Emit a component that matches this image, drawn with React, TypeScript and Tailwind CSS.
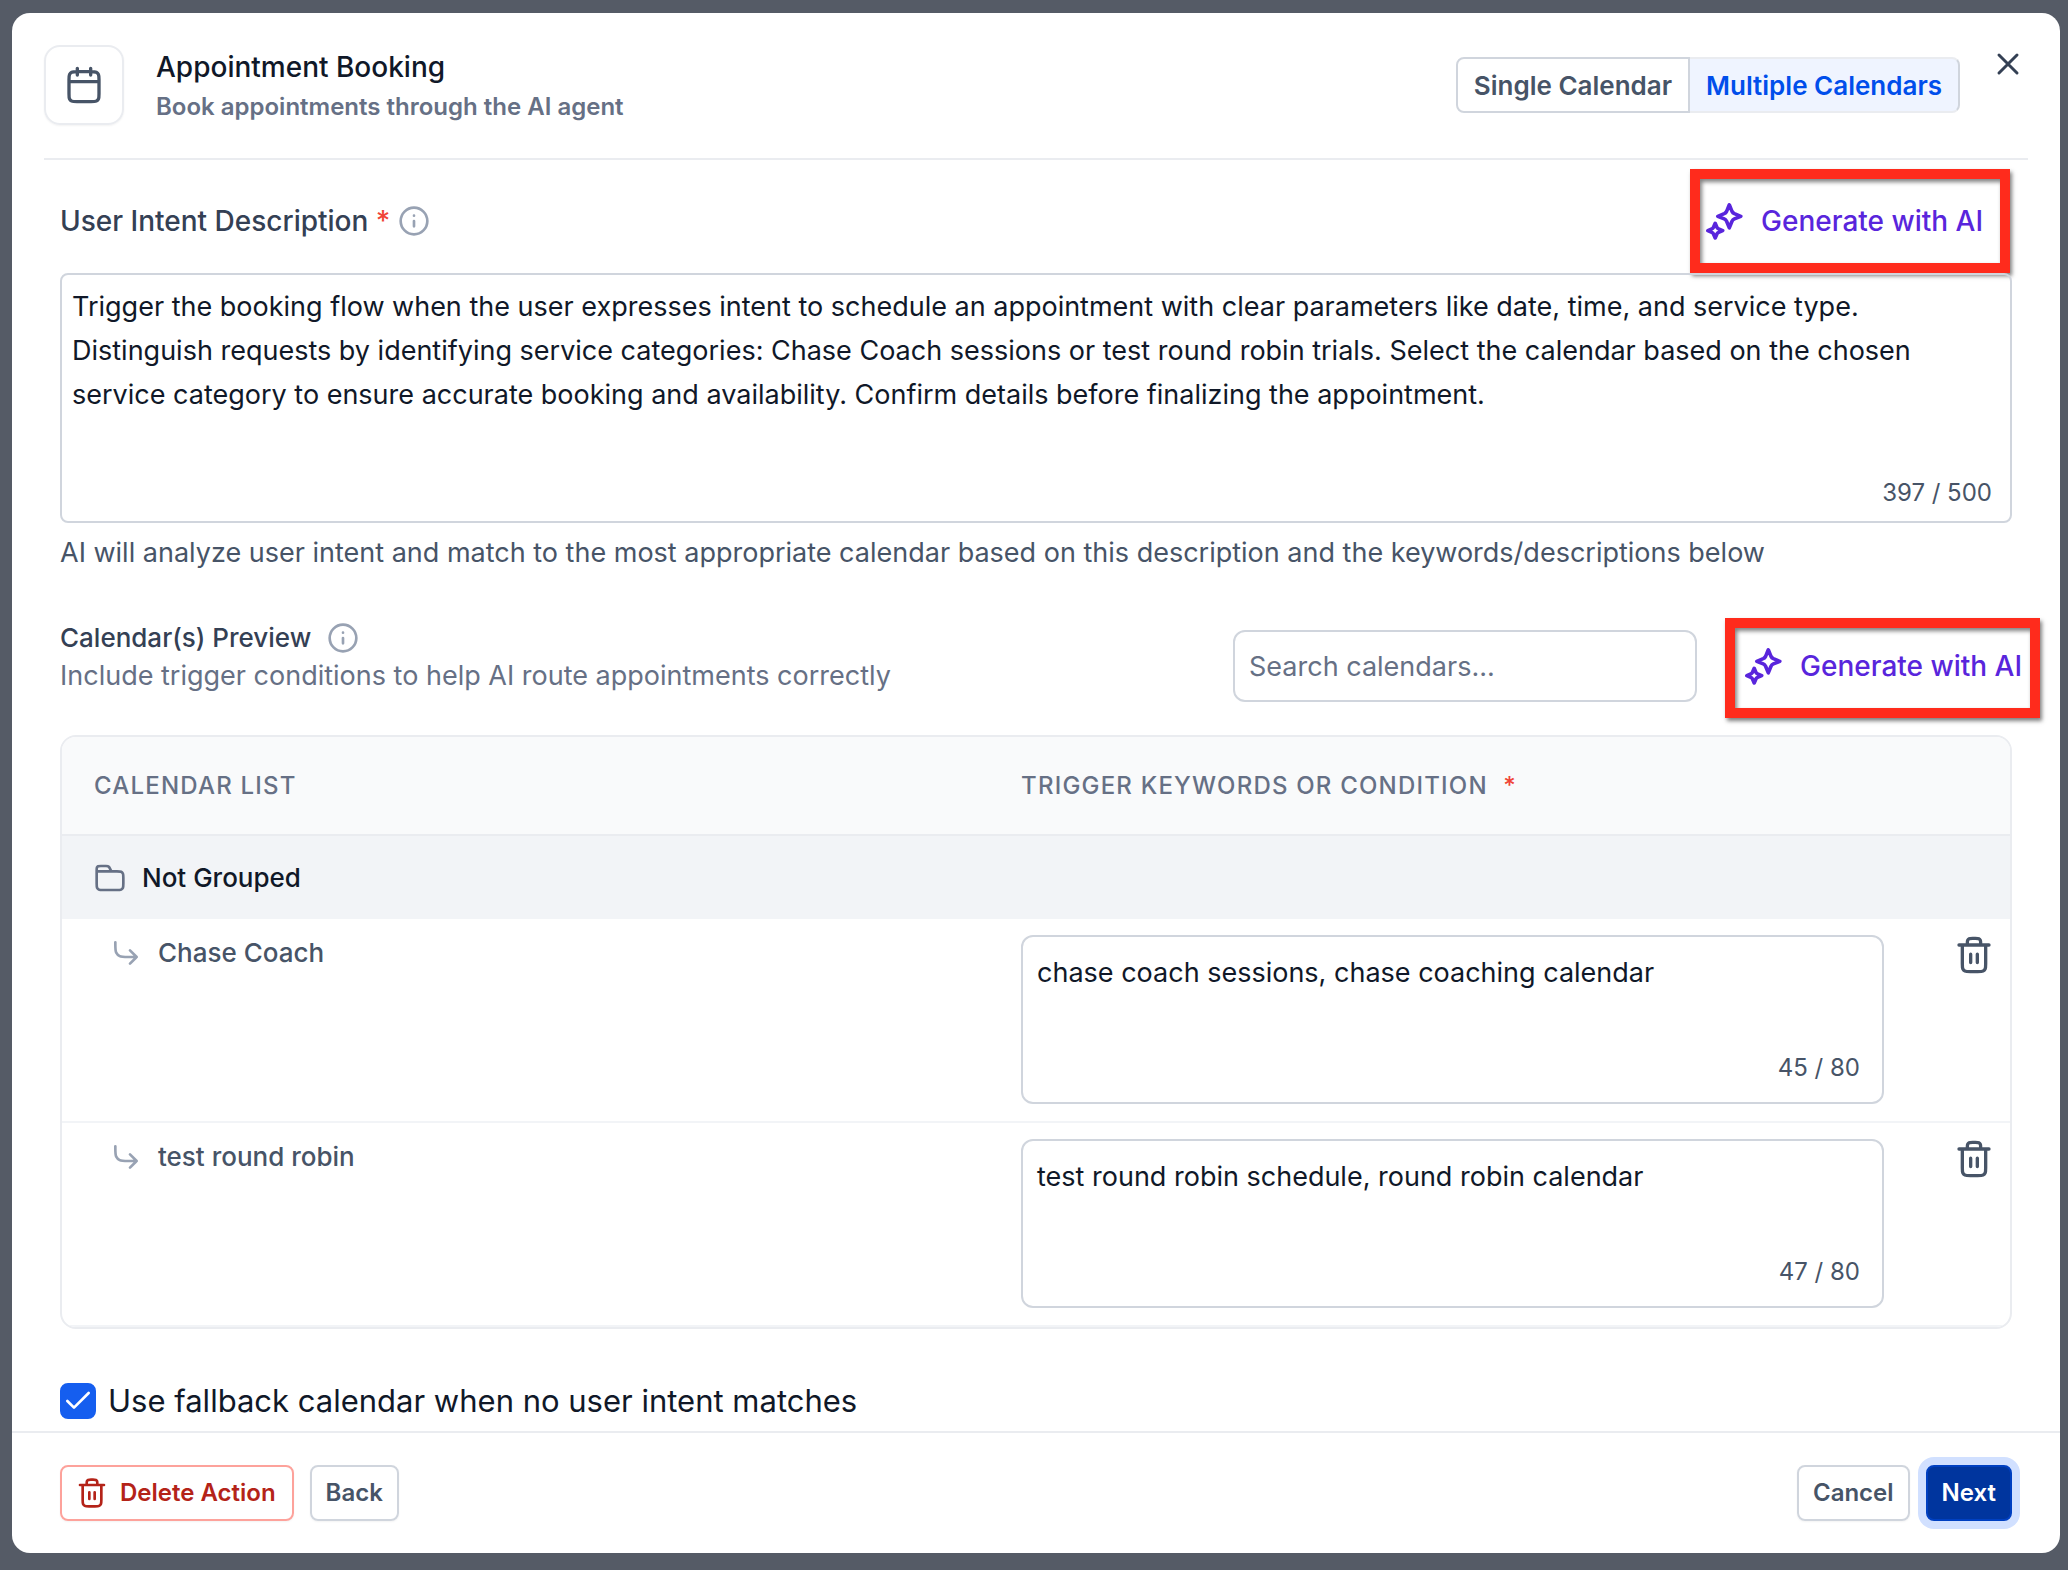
import { useState } from "react"
import type { ReactNode } from "react"

type Calendar = { id: string; name: string; keywords: string }

const INITIAL_INTENT =
  "Trigger the booking flow when the user expresses intent to schedule an appointment with clear parameters like date, time, and service type. Distinguish requests by identifying service categories: Chase Coach sessions or test round robin trials. Select the calendar based on the chosen service category to ensure accurate booking and availability. Confirm details before finalizing the appointment."

const INITIAL_CALENDARS: Calendar[] = [
  { id: "chase", name: "Chase Coach", keywords: "chase coach sessions, chase coaching calendar" },
  { id: "robin", name: "test round robin", keywords: "test round robin schedule, round robin calendar" },
]

function Icon({ className, children }: { className: string; children: ReactNode }) {
  return (
    <svg
      viewBox="0 0 24 24"
      fill="none"
      stroke="currentColor"
      strokeWidth="2"
      strokeLinecap="round"
      strokeLinejoin="round"
      aria-hidden="true"
      className={`shrink-0 ${className}`}
    >
      {children}
    </svg>
  )
}

function TrashIcon({ className }: { className: string }) {
  return (
    <Icon className={className}>
      <path d="M16 6V5.2C16 4.08 16 3.52 15.782 3.092C15.59 2.716 15.284 2.41 14.908 2.218C14.48 2 13.92 2 12.8 2H11.2C10.08 2 9.52 2 9.092 2.218C8.716 2.41 8.41 2.716 8.218 3.092C8 3.52 8 4.08 8 5.2V6M10 11.5V16.5M14 11.5V16.5M3 6H21M19 6V17.2C19 18.88 19 19.72 18.673 20.362C18.385 20.926 17.926 21.385 17.362 21.673C16.72 22 15.88 22 14.2 22H9.8C8.12 22 7.28 22 6.638 21.673C6.074 21.385 5.615 20.926 5.327 20.362C5 19.72 5 18.88 5 17.2V6" />
    </Icon>
  )
}

function InfoIcon() {
  return (
    <Icon className="size-8 text-[#98a2b3]">
      <circle cx="12" cy="12" r="10" />
      <path d="M12 16V12M12 8H12.01" />
    </Icon>
  )
}

function GenerateButton() {
  return (
    <button type="button" className="flex items-center gap-[18px] text-[28px] leading-10 font-medium text-[#5925dc]">
      <svg viewBox="0 0 37 37" fill="none" stroke="currentColor" strokeWidth="3.6" strokeLinejoin="round" aria-hidden="true" className="size-[37px] shrink-0">
        <path d="M23.3 1.8L26 8.4Q26.8 10 28.4 10.7L34.8 13.3L28.4 15.9Q26.8 16.6 26 18.2L23.3 24.8L20.6 18.2Q19.8 16.6 18.2 15.9L11.8 13.3L18.2 10.7Q19.8 10 20.6 8.4Z" />
        <path d="M9.2 20.3L10.9 24.2Q11.4 25.4 12.6 25.9L16.7 27.6L12.6 29.3Q11.4 29.8 10.9 31L9.2 35L7.5 31Q7 29.8 5.8 29.3L1.8 27.6L5.8 25.9Q7 25.4 7.5 24.2Z" />
      </svg>
      Generate with AI
    </button>
  )
}

function Highlight({ className, children }: { className: string; children: ReactNode }) {
  return (
    <div className={`flex items-center border-10 border-[#ff2b1c] shadow-[2px_3px_4px_rgba(0,0,0,0.5),inset_2px_3px_4px_rgba(0,0,0,0.5)] ${className}`}>
      {children}
    </div>
  )
}

export default function App() {
  const [mode, setMode] = useState("multiple")
  const [intent, setIntent] = useState(INITIAL_INTENT)
  const [calendars, setCalendars] = useState(INITIAL_CALENDARS)
  const [search, setSearch] = useState("")
  const [fallback, setFallback] = useState(true)

  const visible = calendars.filter(c => c.name.toLowerCase().includes(search.toLowerCase()))

  const setKeywords = (id: string, keywords: string) =>
    setCalendars(list => list.map(c => (c.id === id ? { ...c, keywords } : c)))

  return (
    <div className="flex min-h-screen bg-[#555b66] pt-[13px] pr-2 pb-[17px] pl-3 font-['Inter',sans-serif] text-[#101828]">
      <div role="dialog" aria-labelledby="dialog-title" className="flex w-full flex-col rounded-[18px] bg-white">
        <header className="mx-8 flex items-start border-b-2 border-[#eaecf0] pt-8 pb-[33px]">
          <div className="flex size-20 items-center justify-center rounded-2xl border-2 border-[#eaecf0] text-[#475467] shadow-xs">
            <Icon className="size-10">
              <path d="M21 10H3M16 2V6M8 2V6M7.8 22H16.2C17.88 22 18.72 22 19.362 21.673C19.926 21.385 20.385 20.926 20.673 20.362C21 19.72 21 18.88 21 17.2V8.8C21 7.12 21 6.28 20.673 5.638C20.385 5.074 19.926 4.615 19.362 4.327C18.72 4 17.88 4 16.2 4H7.8C6.12 4 5.28 4 4.638 4.327C4.074 4.615 3.615 5.074 3.327 5.638C3 6.28 3 7.12 3 8.8V17.2C3 18.88 3 19.72 3.327 20.362C3.615 20.926 4.074 21.385 4.638 21.673C5.28 22 6.12 22 7.8 22Z" />
            </Icon>
          </div>
          <div className="ml-8 flex-1">
            <h1 id="dialog-title" className="text-[28px] leading-11 font-medium">Appointment Booking</h1>
            <p className="text-2xl leading-9 font-semibold text-[#667085]">Book appointments through the AI agent</p>
          </div>
          <div className="mt-3 flex h-14 text-[26px] font-semibold">
            <button
              type="button"
              aria-pressed={mode === "single"}
              onClick={() => setMode("single")}
              className="rounded-l-lg border-2 border-[#d0d5dd] px-4 text-[#475467]"
            >
              Single Calendar
            </button>
            <button
              type="button"
              aria-pressed={mode === "multiple"}
              onClick={() => setMode("multiple")}
              className="rounded-r-lg border-2 border-l-0 border-[#eaecf0] border-r-[#d0d5dd] bg-[#eff4ff] px-4 text-[#004eeb]"
            >
              Multiple Calendars
            </button>
          </div>
          <button type="button" aria-label="Close" className="mt-px mr-0.5 ml-[30px] text-[#344054]">
            <Icon className="size-9">
              <path d="M18 6L6 18M6 6L18 18" />
            </Icon>
          </button>
        </header>

        <main className="flex flex-1 flex-col px-12">
          <div className="mt-[9px] flex items-center justify-between">
            <div className="flex items-center gap-2">
              <label htmlFor="intent" className="text-[28px] font-medium text-[#344054]">
                User Intent Description <span className="text-[#f04438]">*</span>
              </label>
              <InfoIcon />
            </div>
            <Highlight className="mr-0.5 h-[104px] w-80 pl-1.5">
              <GenerateButton />
            </Highlight>
          </div>

          <div className="relative">
            <textarea
              id="intent"
              maxLength={500}
              value={intent}
              onChange={e => setIntent(e.target.value)}
              className="block h-[250px] w-full resize-none rounded-lg border-2 border-[#d0d5dd] px-2.5 py-2.5 text-[27px] leading-11"
            />
            <span className="absolute right-5 bottom-2.5 text-2xl leading-10 text-[#475467]">{intent.length} / 500</span>
          </div>
          <p className="mt-2 text-[27px] leading-11 text-[#475467]">
            AI will analyze user intent and match to the most appropriate calendar based on this description and the keywords/descriptions below
          </p>

          <div className="mt-[43px] flex items-center">
            <div className="flex-1 self-start">
              <div className="flex items-center gap-4">
                <h2 className="text-[26px] leading-10 font-medium text-[#344054]">Calendar(s) Preview</h2>
                <InfoIcon />
              </div>
              <p className="text-[27px] leading-9 text-[#667085]">Include trigger conditions to help AI route appointments correctly</p>
            </div>
            <input
              type="search"
              aria-label="Search calendars"
              placeholder="Search calendars..."
              value={search}
              onChange={e => setSearch(e.target.value)}
              className="mb-1 h-[72px] w-[464px] rounded-xl border-2 border-[#d0d5dd] px-3.5 text-[27px] placeholder:text-[#667085]"
            />
            <Highlight className="-mr-7 ml-7 h-[100px] w-[315px] pb-1 pl-2.5">
              <GenerateButton />
            </Highlight>
          </div>

          <div className="mt-[17px] overflow-hidden rounded-2xl border-2 border-[#eaecf0]">
            <table className="w-full table-fixed text-left">
              <thead>
                <tr className="h-[98px] border-b-2 border-[#eaecf0] bg-[#f9fafb] text-2xl tracking-wider text-[#667085] uppercase">
                  <th className="w-[48%] px-8 font-medium">Calendar list</th>
                  <th className="px-6 font-medium">
                    Trigger keywords or condition <span className="ml-2 text-[#f04438]">*</span>
                  </th>
                  <th className="w-[94px]" aria-label="Actions" />
                </tr>
              </thead>
              <tbody>
                <tr className="h-[84px] bg-[#f2f4f7]">
                  <th colSpan={3} className="px-8 text-[26px] font-medium">
                    <span className="flex items-center gap-4">
                      <Icon className="size-8 text-[#667085]">
                        <path d="M13 7L11.885 4.769C11.564 4.127 11.403 3.806 11.164 3.571C10.952 3.364 10.696 3.206 10.417 3.108C10.101 3 9.742 3 9.024 3H5.2C4.08 3 3.52 3 3.092 3.218C2.716 3.41 2.41 3.716 2.218 4.092C2 4.52 2 5.08 2 6.2V7M2 7H17.2C18.88 7 19.72 7 20.362 7.327C20.926 7.615 21.385 8.074 21.673 8.638C22 9.28 22 10.12 22 11.8V16.2C22 17.88 22 18.72 21.673 19.362C21.385 19.926 20.926 20.385 20.362 20.673C19.72 21 18.88 21 17.2 21H6.8C5.12 21 4.28 21 3.638 20.673C3.074 20.385 2.615 19.926 2.327 19.362C2 18.72 2 17.88 2 16.2V7Z" />
                      </Icon>
                      Not Grouped
                    </span>
                  </th>
                </tr>
                {visible.map(c => (
                  <tr key={c.id} className="border-b-2 border-[#f2f4f7] align-top">
                    <td className="pt-4 pl-12">
                      <label htmlFor={c.id} className="flex items-center gap-4 text-[26px] leading-9 font-medium text-[#475467]">
                        <Icon className="size-8 text-[#98a2b3]">
                          <path d="M4 4V5.4C4 8.76 4 10.44 4.654 11.724C5.229 12.853 6.147 13.771 7.276 14.346C8.56 15 10.24 15 13.6 15H20M20 15L15 10M20 15L15 20" />
                        </Icon>
                        {c.name}
                      </label>
                    </td>
                    <td className="pt-4 pr-8 pb-[17px] pl-6">
                      <div className="relative">
                        <textarea
                          id={c.id}
                          maxLength={80}
                          value={c.keywords}
                          onChange={e => setKeywords(c.id, e.target.value)}
                          className="block h-[169px] w-full resize-none rounded-xl border-2 border-[#d0d5dd] px-3.5 py-4 text-[27px] leading-10"
                        />
                        <span className="absolute right-6 bottom-4 text-2xl leading-10 text-[#475467]">{c.keywords.length} / 80</span>
                      </div>
                    </td>
                    <td className="pt-4 pr-4">
                      <button
                        type="button"
                        aria-label={`Remove ${c.name}`}
                        onClick={() => setCalendars(list => list.filter(x => x.id !== c.id))}
                        className="ml-auto block text-[#475467]"
                      >
                        <TrashIcon className="size-10" />
                      </button>
                    </td>
                  </tr>
                ))}
              </tbody>
            </table>
          </div>

          <label className="mt-auto flex items-center gap-3 pb-2 text-[31px] leading-11">
            <span className="relative flex size-9">
              <input
                type="checkbox"
                checked={fallback}
                onChange={e => setFallback(e.target.checked)}
                className="peer size-9 appearance-none rounded-lg border-2 border-[#d0d5dd] checked:border-[#155eef] checked:bg-[#155eef]"
              />
              <Icon className="pointer-events-none absolute inset-0.5 hidden size-8 text-white peer-checked:block">
                <path d="M20 6L9 17L4 12" />
              </Icon>
            </span>
            Use fallback calendar when no user intent matches
          </label>
        </main>

        <footer className="flex gap-4 border-t-2 border-[#eaecf0] px-12 py-8 text-2xl font-semibold text-[#475467]">
          <button type="button" className="flex h-14 items-center gap-3 rounded-lg border-2 border-[#fda29b] pr-4 pl-3.5 text-[#b42318] shadow-xs">
            <TrashIcon className="size-8" />
            Delete Action
          </button>
          <button type="button" className="h-14 rounded-lg border-2 border-[#d0d5dd] px-3.5 shadow-xs">Back</button>
          <button type="button" className="ml-auto h-14 rounded-lg border-2 border-[#d0d5dd] px-3.5 shadow-xs">Cancel</button>
          <button type="button" className="h-14 rounded-lg border-2 border-[#0040c1] bg-[#00359e] px-3.5 text-white ring-8 ring-[#d1e0ff]">Next</button>
        </footer>
      </div>
    </div>
  )
}
